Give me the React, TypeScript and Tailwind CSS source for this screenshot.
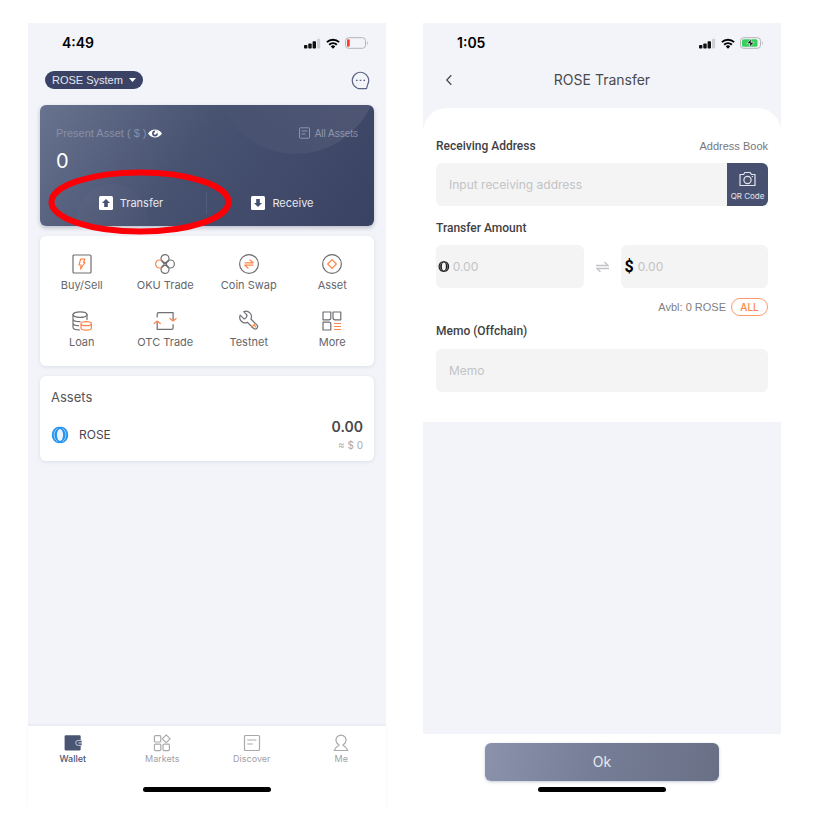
import type { ReactNode } from "react";

const G = "#6f6f74";
const O = "#ff8548";

function Cellular() {
  return (
    <svg width="17" height="11" viewBox="0 0 17 11" aria-hidden="true">
      <rect x="0" y="7" width="3.4" height="3.500" rx="0.8" fill="#111" />
      <rect x="4.3" y="5.500" width="3.4" height="5" rx="0.8" fill="#111" />
      <rect x="8.6" y="3.200" width="3.4" height="7.300" rx="0.8" fill="#111" />
      <rect x="13" y="0.800" width="3.2" height="9.700" rx="0.8" fill="#cfd0d4" />
    </svg>
  );
}

function Wifi() {
  return (
    <svg width="14" height="11" viewBox="0 0 14 11" fill="none" stroke="#000" strokeWidth="2" aria-hidden="true">
      <path d="M0.9 4.1a8.8 8.8 0 0 1 12.2 0" />
      <path d="M3.2 6.7a5.5 5.5 0 0 1 7.6 0" />
      <path d="M7 10.7 4.8 8.4a3.2 3.2 0 0 1 4.4 0z" fill="#000" stroke="none" />
    </svg>
  );
}

function Battery({ charging }: { charging?: boolean }) {
  return (
    <svg width="24" height="12" viewBox="0 0 24 12" aria-hidden="true">
      <rect x="0.5" y="0.7" width="20" height="10.6" rx="3" fill="none" stroke="#b4b4b8" />
      <path d="M22 4.2c1 .3 1.2 3.300 0 3.600z" fill="#b4b4b8" />
      {charging ? (
        <>
          <rect x="2" y="2.200" width="15.500" height="7.600" rx="1.600" fill="#38cf5a" />
          <path d="M11.800 1.200 6.800 6.700h3.200l-.9 4.100 5-5.500h-3.200z" fill="#111" stroke="#f3f4f9" strokeWidth="0.700" />
        </>
      ) : (
        <rect x="2" y="2.200" width="2.700" height="7.600" rx="1" fill="#ff3b30" />
      )}
    </svg>
  );
}

function StatusBar({ time, charging }: { time: string; charging?: boolean }) {
  return (
    <div className="flex h-10 items-center justify-between pr-[17px] pl-[34px]">
      <span className="text-sm font-semibold text-black">{time}</span>
      <span className="flex items-center gap-[5px]">
        <Cellular />
        <Wifi />
        <Battery charging={charging} />
      </span>
    </div>
  );
}

function HomeIndicator() {
  return <div className="mx-auto h-[5px] w-32 rounded-full bg-black" />;
}

function RoseMark({ size, color, line }: { size: number; color: string; line: string }) {
  return (
    <svg width={size} height={size} viewBox="0 0 18 18" fill="none" aria-hidden="true">
      <ellipse cx="7.800" cy="9" rx="7" ry="8.200" fill={color} />
      <ellipse cx="10.200" cy="9" rx="7" ry="8.200" fill={color} />
      <ellipse cx="9" cy="9" rx="3.100" ry="6" fill={line} />
      <path d="M6.600 2.400C2 5 2 13 6.600 15.600M11.400 2.400c4.600 2.600 4.600 10.600 0 13.200" stroke={line} strokeWidth="0.600" />
    </svg>
  );
}

function Ico({ children }: { children: ReactNode }) {
  return (
    <svg className="overflow-visible" width="20" height="20" viewBox="0 0 20 20" fill="none" stroke={G} strokeWidth="1.2" strokeLinejoin="round" strokeLinecap="round" aria-hidden="true">
      {children}
    </svg>
  );
}

const services: { label: string; icon: ReactNode }[] = [
  {
    label: "Buy/Sell",
    icon: (
      <Ico>
        <rect x="1" y="1" width="18" height="18" rx="1" />
        <path stroke={O} d="M8.600 5.200h4.200l-1.200 3.300H13L8.500 15l.7-4H7z" />
      </Ico>
    ),
  },
  {
    label: "OKU Trade",
    icon: (
      <Ico>
        <circle cx="10" cy="4.600" r="4" />
        <circle cx="10" cy="15.400" r="4" />
        <circle cx="15.400" cy="10" r="4" />
        <circle cx="4.600" cy="10" r="4" stroke={O} />
        <path strokeWidth="1.500" d="M7 7l6 6M13 7l-6 6" />
      </Ico>
    ),
  },
  {
    label: "Coin Swap",
    icon: (
      <Ico>
        <circle cx="10" cy="10" r="9.400" />
        <path stroke={O} d="M6 8.800h8.200L11 6M14 11.200H5.800L9 14" />
      </Ico>
    ),
  },
  {
    label: "Asset",
    icon: (
      <Ico>
        <circle cx="10" cy="10" r="9.400" />
        <path stroke={O} d="M10 5.700 14.300 10 10 14.300 5.700 10z" />
      </Ico>
    ),
  },
  {
    label: "Loan",
    icon: (
      <Ico>
        <ellipse cx="8" cy="3.600" rx="7" ry="2.800" />
        <path d="M1 3.600v12.600c0 1.500 2.800 2.700 6.300 2.700M15 3.600v5M1 8c0 1.500 3 2.700 7 2.700M1 12c0 1.400 2.500 2.600 5.500 2.600" />
        <path stroke={O} d="M9 12.700c0-1 2.300-2 5.200-2s5.200 1 5.200 2-2.300 2-5.200 2-5.200-1-5.200-2zV17c0 1 2.300 2.100 5.200 2.100s5.200-1.100 5.200-2.100v-4.300" />
      </Ico>
    ),
  },
  {
    label: "OTC Trade",
    icon: (
      <Ico>
        <path d="M2.200 6V3c0-1 .4-1.400 1.400-1.400h14.500v7.500M18.100 13.500V17c0 1-.4 1.400-1.400 1.400H2.200V11" />
        <path stroke={O} d="M15 7.500l3.100 2.500 3-2.500M-.8 12.500l3-2.500 3.100 2.500" />
      </Ico>
    ),
  },
  {
    label: "Testnet",
    icon: (
      <Ico>
        <g transform="translate(21 -1) scale(-0.92 0.92)" strokeWidth="1.300">
          <path d="M14.700 6.300a1 1 0 0 0 0 1.400l1.600 1.600a1 1 0 0 0 1.400 0l3.770-3.770a6 6 0 0 1-7.940 7.940l-6.400 6.400a2.600 2.600 0 0 1-3.700-3.700l6.400-6.400a6 6 0 0 1 7.940-7.940l-3.760 3.760z" />
          <path stroke={O} d="M5.200 15l4 3.600M4.700 18.200l2-2" />
        </g>
      </Ico>
    ),
  },
  {
    label: "More",
    icon: (
      <Ico>
        <path d="M1 1h7.800v5.800a2 2 0 0 1-2 2H1zM11 1h7.800v7.800H13a2 2 0 0 1-2-2zM1 11.200h5.800a2 2 0 0 1 2 2V19H1z" />
        <path stroke={O} strokeLinecap="butt" d="M12 12.500h7M12 15.500h7M12 18.500h7" />
      </Ico>
    ),
  },
];

function TabIcon({ children, color = "#aaaaad" }: { children: ReactNode; color?: string }) {
  return (
    <svg width="18" height="18" viewBox="0 0 18 18" fill="none" stroke={color} strokeWidth="1.200" strokeLinejoin="round" aria-hidden="true">
      {children}
    </svg>
  );
}

const tabs: { label: string; icon: ReactNode; active?: boolean }[] = [
  {
    label: "Wallet",
    active: true,
    icon: (
      <TabIcon color="#4a5473">
        <path d="M.6 2.500q0-1.300 1.300-1.300h13.500q1.300 0 1.300 1.300v12.800q0 1.300-1.300 1.300H1.900q-1.300 0-1.300-1.300z" fill="#4a5473" stroke="none" />
        <path d="M18 6.400h-3.800a2.500 2.500 0 0 0 0 5H18z" fill="#4a5473" stroke="#d5d8e2" strokeWidth="0.900" />
        <path d="M18 8.900h-3.500" stroke="#d5d8e2" strokeWidth="1" />
      </TabIcon>
    ),
  },
  {
    label: "Markets",
    icon: (
      <TabIcon>
        <rect x="1.400" y="1.600" width="6.400" height="6.400" rx="1" />
        <path d="M13.200.9 17.100 4.800l-3.900 3.900-3.900-3.900z" />
        <rect x="1.400" y="10.200" width="6.400" height="6.400" rx="1" />
        <rect x="10" y="10.200" width="6.400" height="6.400" rx="1" />
      </TabIcon>
    ),
  },
  {
    label: "Discover",
    icon: (
      <TabIcon>
        <rect x="1.500" y="1.500" width="15" height="15" rx="1" />
        <path d="M4.300 6h9.200M4.300 10h5.500" />
      </TabIcon>
    ),
  },
  {
    label: "Me",
    icon: (
      <TabIcon>
        <path d="M6.700 10.500A5 5 0 1 1 11.300 10.500M6.700 10.500c.6.300.6.700 0 1-2.300 1.200-3.800 2.600-4.500 5h13.600c-.7-2.400-2.200-3.800-4.500-5-.6-.3-.6-.7 0-1" />
      </TabIcon>
    ),
  },
];

function ArrowBadge({ down }: { down?: boolean }) {
  return (
    <svg width="14" height="14" viewBox="0 0 14 14" aria-hidden="true">
      <rect width="14" height="14" rx="1.500" fill="#fff" />
      <path d={down ? "M5.200 3h3.600v4H11l-4 4-4-4h2.200z" : "M5.200 11h3.600V7H11L7 3 3 7h2.200z"} fill="#454f70" />
    </svg>
  );
}

function WalletScreen() {
  return (
    <section className="flex flex-col bg-[#f3f4f9]">
      <StatusBar time="4:49" />
      <header className="flex h-[34px] items-center justify-between pr-4 pl-[17px]">
        <button className="flex h-[18px] items-center gap-1.5 rounded-full bg-[#3a4365] px-[7px] font-['Liberation_Sans',sans-serif] text-[11px] text-[#e2e5ee]">
          ROSE System
          <svg width="7" height="4" viewBox="0 0 7 4" aria-hidden="true">
            <path d="M0 0h7L3.500 4z" fill="#fff" />
          </svg>
        </button>
        <button aria-label="Messages">
          <svg className="block" width="19" height="19" viewBox="0 0 19 19" fill="none" stroke="#5b6484" strokeWidth="1.200" aria-hidden="true">
            <path d="M9.500 17.700a8.200 8.200 0 1 1 7.200-4.300l-1.200 4.300z" strokeLinejoin="round" />
            <path d="M5 9.300h1.600M8.700 9.300h1.600M12.400 9.300H14" />
          </svg>
        </button>
      </header>

      <div className="mt-2 flex flex-1 flex-col gap-[10px] px-3">
        <div className="relative rounded-md bg-linear-[125deg] from-[#68738f] via-[#475170] via-45% to-[#3a4262] px-4 pt-5 pb-3 shadow-[0_2px_4px_rgba(60,70,100,0.3)]">
          <svg className="absolute inset-0 h-full w-full" viewBox="0 0 334 121" preserveAspectRatio="xMaxYMid meet" aria-hidden="true">
            <defs>
              <linearGradient id="glow" x1="0" y1="0" x2="1" y2="0">
                <stop offset="0" stopColor="#fff" stopOpacity="0.010" />
                <stop offset="1" stopColor="#fff" stopOpacity="0.080" />
              </linearGradient>
            </defs>
            <path d="M181 0a82 82 0 0 0 150 0z" fill="url(#glow)" />
            <path d="M36 121v-6a36 36 0 0 1 72 0v6z" fill="#fff" fillOpacity="0.020" />
          </svg>
          <div className="flex h-4 items-center justify-between font-['Liberation_Sans',sans-serif] text-[11px] text-[#8790a8]">
            <span className="flex items-center gap-0.5">
              Present Asset ( $ )
              <svg width="14" height="9" viewBox="0 0 14 9" aria-hidden="true">
                <path d="M0 4.500C3.500-.8 10.500-.8 14 4.500 10.500 9.800 3.500 9.800 0 4.500z" fill="#fff" />
                <circle cx="7" cy="4.500" r="2.900" fill="#46506f" />
                <path d="M7 4.500V1.600a2.900 2.900 0 0 1 2.900 2.900z" fill="#fff" />
                <circle cx="7" cy="4.500" r="1.200" fill="#fff" />
              </svg>
            </span>
            <button className="flex items-center gap-[5px] text-[10px]">
              <svg width="11" height="12" viewBox="0 0 11 12" fill="none" stroke="#8790a8" aria-hidden="true">
                <rect x="0.500" y="0.800" width="10" height="10.400" rx="0.800" />
                <path d="M2.500 4h6M2.500 7h4" />
              </svg>
              All Assets
            </button>
          </div>
          <p className="mt-2 text-xl leading-6 text-white">0</p>
          <div className="mt-[19px] grid h-[22px] grid-cols-2 divide-x divide-[#525c7b] text-[11px] text-[#e6e8ef]">
            <button className="flex items-center justify-center gap-[7px]">
              <ArrowBadge />
              Transfer
            </button>
            <button className="flex items-center justify-center gap-[7px]">
              <ArrowBadge down />
              Receive
            </button>
          </div>
          <svg className="absolute top-16 left-2" width="184" height="66" viewBox="0 0 184 66" aria-hidden="true">
            <ellipse cx="92" cy="33" rx="88.500" ry="29.500" fill="none" stroke="#fb0007" strokeWidth="6" />
          </svg>
        </div>

        <nav className="grid grid-cols-4 gap-y-[19px] rounded-md bg-white pt-[18px] pb-[17px] shadow-[0_1px_4px_rgba(60,70,110,0.12)]">
          {services.map((s) => (
            <a key={s.label} href="#" className="flex flex-col items-center gap-1 text-[11px] leading-[14px] text-[#66666a]">
              {s.icon}
              {s.label}
            </a>
          ))}
        </nav>

        <div className="rounded-md bg-white pt-3 pr-[11px] pb-2 pl-[11px] shadow-[0_1px_4px_rgba(60,70,110,0.12)]">
          <h2 className="text-[13px] leading-[18px] text-[#55555a]">Assets</h2>
          <div className="mt-[11px] flex items-center">
            <RoseMark size={18} color="#2594f0" line="#e9f4fe" />
            <span className="ml-2.5 text-xs text-[#47474b]">ROSE</span>
            <div className="ml-auto text-right">
              <p className="text-sm leading-5 font-semibold text-[#47474b]">0.00</p>
              <p className="text-[10px] leading-4 text-[#aaaaae]">≈ $ 0</p>
            </div>
          </div>
        </div>
      </div>

      <footer className="flex h-[81px] flex-col justify-between bg-white pt-2 pb-[15px] shadow-[0_-1px_2px_rgba(60,70,110,0.08)]">
        <nav className="grid grid-cols-4">
          {tabs.map((t) => (
            <a
              key={t.label}
              href="#"
              className={
                t.active
                  ? "flex flex-col items-center gap-px text-[9px] leading-3 font-medium text-[#4a5473]"
                  : "flex flex-col items-center gap-px text-[9px] leading-3 text-[#a0a0a4]"
              }
            >
              {t.icon}
              {t.label}
            </a>
          ))}
        </nav>
        <HomeIndicator />
      </footer>
    </section>
  );
}

function TransferScreen() {
  return (
    <section className="flex flex-col bg-[#f3f4f9]">
      <StatusBar time="1:05" charging />
      <header className="grid h-[34px] grid-cols-[32px_1fr_32px] items-center px-3">
        <button aria-label="Back" className="flex pl-2.5">
          <svg width="8" height="12" viewBox="0 0 8 12" fill="none" stroke="#4a4a4e" strokeWidth="1.300" aria-hidden="true">
            <path d="M6.300 1.300 1.800 6l4.500 4.700" />
          </svg>
        </button>
        <h1 className="text-center text-sm text-[#4a4a4e]">ROSE Transfer</h1>
      </header>

      <form className="mt-[11px] rounded-t-3xl bg-white px-[13px] pt-[30px] pb-[30px]">
        <div className="flex h-4 items-center justify-between">
          <label htmlFor="address" className="font-[Roboto,sans-serif] text-xs font-medium text-[#3f3f43]">
            Receiving Address
          </label>
          <a href="#" className="font-['Liberation_Sans',sans-serif] text-[11px] text-[#77777b]">
            Address Book
          </a>
        </div>
        <div className="mt-[9px] flex h-[43px] overflow-hidden rounded-md bg-[#f4f4f4]">
          <input
            id="address"
            placeholder="Input receiving address"
            className="min-w-0 flex-1 px-[13px] text-xs placeholder:text-[#c3c3c6]"
          />
          <button type="button" className="flex w-[41px] flex-col items-center justify-end gap-1 bg-[#47506f] pb-[5px] text-[8px] leading-[10px] text-[#e3e5ee]">
            <svg width="17" height="16" viewBox="0 0 17 16" fill="none" stroke="#e3e5ee" strokeWidth="1.200" strokeLinejoin="round" aria-hidden="true">
              <path d="M1 3.500h3.600L5.800 1.500h5.400l1.200 2H16v11H1z" />
              <circle cx="8.500" cy="9" r="3.600" />
              <path d="M12.800 5.500h1.200" />
            </svg>
            QR Code
          </button>
        </div>

        <label htmlFor="amount" className="mt-[14px] block font-[Roboto,sans-serif] text-xs leading-4 font-medium text-[#3f3f43]">
          Transfer Amount
        </label>
        <div className="mt-[9px] grid grid-cols-[1fr_37px_1fr] items-center">
          <div className="flex h-[43px] items-center gap-[3px] rounded-md bg-[#f4f4f4] pl-0.5">
            <RoseMark size={13} color="#1c1c1e" line="#f4f4f4" />
            <input id="amount" placeholder="0.00" className="w-full min-w-0 text-xs placeholder:text-[#c3c3c6]" />
          </div>
          <svg className="mx-auto" width="13" height="12" viewBox="0 0 13 12" fill="none" stroke="#c4c4c8" strokeWidth="1.400" aria-hidden="true">
            <path d="M0 4.500h12L8.500 1M13 7.500H1L4.500 11" />
          </svg>
          <div className="flex h-[43px] items-center gap-1 rounded-md bg-[#f4f4f4] pl-1">
            <span className="font-[Roboto,sans-serif] text-base font-bold text-black">$</span>
            <input aria-label="Amount in dollars" placeholder="0.00" className="w-full min-w-0 text-xs placeholder:text-[#c3c3c6]" />
          </div>
        </div>

        <div className="mt-[10px] flex h-[18px] items-center justify-end gap-[5px] font-['Liberation_Sans',sans-serif] text-[11px] text-[#808084]">
          Avbl: 0 ROSE
          <button type="button" className="h-[18px] w-[37px] rounded-full border border-[#ff9a6a] font-[Inter,sans-serif] text-[10px] leading-4 font-medium text-[#ff8548]">
            ALL
          </button>
        </div>

        <label htmlFor="memo" className="mt-[7px] block font-[Roboto,sans-serif] text-xs leading-4 font-medium text-[#3f3f43]">
          Memo (Offchain)
        </label>
        <input
          id="memo"
          placeholder="Memo"
          className="mt-[10px] block h-[43px] w-full rounded-md bg-[#f4f4f4] px-[13px] text-xs placeholder:text-[#c3c3c6]"
        />
      </form>

      <footer className="mt-auto flex h-[73px] flex-col justify-between bg-white pt-[9px] pb-[15px]">
        <button className="mx-auto h-[38px] w-[234px] rounded-md bg-linear-[100deg] from-[#8a92ac] via-[#757d96] to-[#697086] text-sm text-[#e8eaf1] shadow-[0_1px_3px_rgba(60,80,130,0.3)]">
          Ok
        </button>
        <HomeIndicator />
      </footer>
    </section>
  );
}

export default function App() {
  return (
    <main className="grid min-h-screen grid-cols-2 gap-[37px] bg-white pt-[23px] pr-[35px] pb-[23px] pl-7 font-[Inter,'Liberation_Sans',sans-serif]">
      <WalletScreen />
      <TransferScreen />
    </main>
  );
}
